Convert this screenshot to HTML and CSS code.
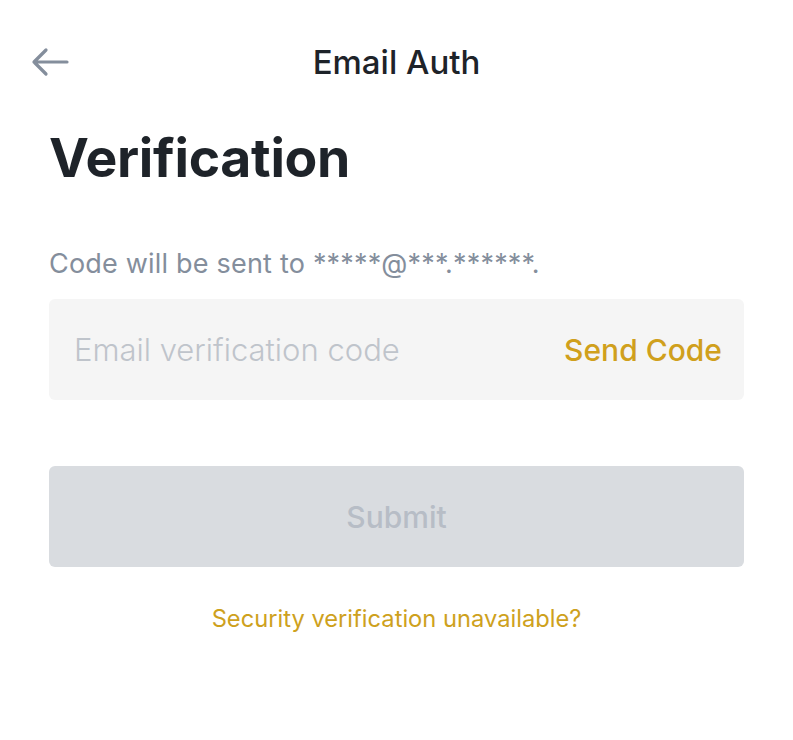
FILE: index.html
```html
<!DOCTYPE html>
<html>
<head>
<meta charset="utf-8">
<link rel="stylesheet" href="styles.css">
</head>
<body>
<div class="page">
  <header class="topbar">
    <button class="back" aria-label="Back">
      <svg width="38" height="30" viewBox="0 0 38 30"><path d="M36 15H3M15 3L3 15l12 12" fill="none" stroke="#848e9c" stroke-width="3.2" stroke-linecap="round" stroke-linejoin="round"/></svg>
    </button>
    <div class="title">Email Auth</div>
  </header>
  <main class="content">
    <h1 class="heading">Verification</h1>
    <p class="hint">Code will be sent to *****@***.******.</p>
    <div class="field">
      <span class="placeholder">Email verification code</span>
      <span class="send">Send Code</span>
    </div>
    <div class="submit">Submit</div>
    <div class="help">Security verification unavailable?</div>
  </main>
</div>
</body>
</html>
```
FILE: styles.css
```css
html, body { margin: 0; padding: 0; background: #fff; }
body { font-family: "Inter", "Noto Sans", sans-serif; }
.page { width: 793px; }
.topbar { position: relative; height: 124px; display: flex; justify-content: center; align-items: flex-start; padding-top: 44px; box-sizing: border-box; }
.topbar .back { position: absolute; left: 31px; top: 47px; border: 0; background: none; padding: 0; width: 38px; height: 30px; }
.topbar .back svg { display: block; }
.title { font-size: 33px; font-weight: 500; color: #1e2329; line-height: 36px; }
.content { padding: 0 49px; }
.heading { margin: 2px 0 0; font-size: 53.5px; font-weight: 700; color: #1e2329; line-height: 64px; letter-spacing: -0.3px; }
.hint { margin: 58px 0 0; font-size: 27px; color: #848e9c; line-height: 32px; letter-spacing: 0.2px; }
.field { margin-top: 19px; height: 101px; background: #f5f5f5; border-radius: 6px; display: flex; align-items: center; justify-content: space-between; padding: 0 22px 0 25px; }
.placeholder { font-size: 31px; color: #bfc4cb; font-weight: 300; }
.send { font-size: 30px; font-weight: 500; color: #d0a01c; }
.submit { margin-top: 66px; height: 101px; background: #d9dce0; border-radius: 6px; display: flex; align-items: center; justify-content: center; font-size: 30px; font-weight: 500; color: #b7bdc6; }
.help { margin-top: 37px; text-align: center; font-size: 23.7px; color: #cea11d; font-weight: 400; line-height: 30px; }
```
